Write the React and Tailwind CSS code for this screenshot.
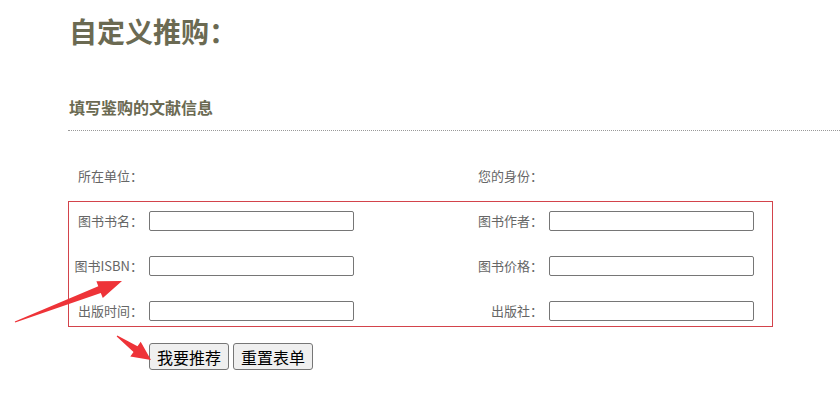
import React from 'react';

const arrowPoints = (tx, ty, px, py, h, w, ws, wt) => {
    const dx = px - tx;
    const dy = py - ty;
    const len = Math.hypot(dx, dy);
    const ux = dx / len;
    const uy = dy / len;
    const nx = -uy;
    const ny = ux;
    const bx = px - ux * h;
    const by = py - uy * h;
    const pts = [
        [tx + nx * wt, ty + ny * wt],
        [bx + nx * ws, by + ny * ws],
        [bx + nx * w, by + ny * w],
        [px, py],
        [bx - nx * w, by - ny * w],
        [bx - nx * ws, by - ny * ws],
        [tx - nx * wt, ty - ny * wt],
    ];
    return pts.map(p => p.map(v => v.toFixed(1)).join(',')).join(' ');
};

function Field({ label }) {
    return (
        <>
            <div className="text-right pr-[6px] text-[13px] leading-[20px] text-[#666]">{label}</div>
            <input type="text" className="h-[20px] w-[205px] border border-[#767676] rounded-[2px] bg-white" />
        </>
    );
}

export default function App() {
    return (
        <div className="relative w-[840px] h-[412px] bg-white overflow-hidden" style={{ fontFamily: '"Noto Sans CJK SC", "Microsoft YaHei", sans-serif' }}>
            <div className="pl-[68px]">
                <h1 className="pt-[13px] pl-[1px] text-[28px] leading-[36px] font-bold text-[#6b6a52]">自定义推购：</h1>

                <h2 className="mt-[48px] pl-[1px] pb-[13px] text-[16px] leading-[20px] font-bold text-[#6b6a52] border-b border-dotted border-[#999]">
                    填写鉴购的文献信息
                </h2>

                <div className="mt-[35px] w-[705px] pl-[1px] grid grid-cols-[80px_205px_195px_205px] items-center">
                    <div className="text-right pr-[6px] text-[13px] leading-[20px] text-[#666]">所在单位：</div>
                    <div />
                    <div className="text-right pr-[6px] text-[13px] leading-[20px] text-[#666]">您的身份：</div>
                    <div />
                </div>

                <div className="mt-[15px] w-[705px] border border-[#d3434b] pt-[9px] pb-[5px] grid grid-cols-[80px_205px_195px_205px] gap-y-[25px] items-center">
                    <Field label="图书书名：" />
                    <Field label="图书作者：" />
                    <Field label="图书ISBN：" />
                    <Field label="图书价格：" />
                    <Field label="出版时间：" />
                    <Field label="出版社：" />
                </div>

                <div className="mt-[16px] ml-[81px] flex gap-[4px]">
                    <button className="h-[27px] w-[80px] border border-[#767676] rounded-[3px] bg-[#efefef] text-[16px] leading-[20px] text-black">我要推荐</button>
                    <button className="h-[27px] w-[80px] border border-[#767676] rounded-[3px] bg-[#efefef] text-[16px] leading-[20px] text-black">重置表单</button>
                </div>
            </div>

            <svg className="absolute left-0 top-0 pointer-events-none" width="840" height="412">
                <polygon points={arrowPoints(15, 322, 122, 281, 24, 9, 3.5, 0.6)} fill="#ee3338" />
                <polygon points={arrowPoints(117, 336, 151, 360, 19, 9, 3.5, 0.6)} fill="#ee3338" />
            </svg>
        </div>
    );
}
